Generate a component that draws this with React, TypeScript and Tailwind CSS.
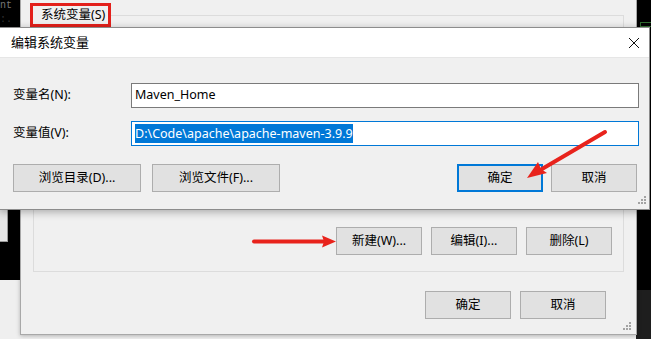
import React from "react";

const FONT = {
  fontFamily: "'Segoe UI', 'Noto Sans', 'Noto Sans CJK SC', sans-serif",
};

function Btn({
  children,
  className = "",
  focused = false,
}: {
  children: React.ReactNode;
  className?: string;
  focused?: boolean;
}) {
  return (
    <div
      className={`flex shrink-0 items-center justify-center bg-[#e1e1e1] text-[12.5px] text-black ${
        focused ? "border-2 border-[#0078d7]" : "border border-[#adadad]"
      } ${className}`}
    >
      {children}
    </div>
  );
}

function Grip({ className = "" }: { className?: string }) {
  // resize grip: triangular pattern of little dots
  const dots = [
    [6, 0],
    [3, 3],
    [6, 3],
    [0, 6],
    [3, 6],
    [6, 6],
  ];
  return (
    <svg width="9" height="9" className={className}>
      {dots.map(([x, y], i) => (
        <rect key={i} x={x} y={y} width="2" height="2" fill="#a3a3a3" />
      ))}
    </svg>
  );
}

export default function App() {
  return (
    <div
      className="relative w-[651px] h-[339px] overflow-hidden bg-[#efefef]"
      style={FONT}
    >
      {/* terminal bits behind the windows */}
      <div className="absolute left-0 top-0 w-[24px] h-[27px] bg-black overflow-hidden">
        <div className="text-[10px] leading-[11px] text-[#777] font-mono">nt</div>
        <div className="text-[10px] leading-[11px] text-[#333] mt-[3px] font-mono">:.</div>
      </div>
      <div className="absolute left-[636px] top-0 right-0 h-[290px] bg-black">
        <div className="mt-[22px] ml-[4px] w-[12px] h-[5px] border border-[#2f6b2f]" />
      </div>
      <div className="absolute left-[636px] top-[290px] right-0 bottom-0 bg-[#1e1e1e]" />
      <div className="absolute left-0 top-[209px] w-[20px] h-[71px] bg-black">
        <div className="w-[8px] h-[33px] bg-[#e6e6e6] border-r border-b border-[#9a9a9a]" />
      </div>

      {/* environment variables window (behind) */}
      <div className="absolute left-[20px] top-[-12px] w-[617px] h-[347px] bg-[#f0f0f0] border-l border-r border-b border-[#a8a8a8] shadow-[0_1px_4px_rgba(0,0,0,0.25)] flex flex-col">
        <div className="relative ml-[12px] mt-[27px] w-[591px] h-[257px] border border-[#dcdcdc] flex flex-col justify-end items-end pr-[11px] pb-[16px]">
          <div className="flex gap-[9px]">
            <Btn className="w-[86px] h-[28px]">新建(W)...</Btn>
            <Btn className="w-[86px] h-[28px]">编辑(I)...</Btn>
            <Btn className="w-[86px] h-[28px]">删除(L)</Btn>
          </div>
        </div>
        <div className="flex justify-end gap-[9px] mr-[30px] mt-[19px]">
          <Btn className="w-[86px] h-[28px]">确定</Btn>
          <Btn className="w-[86px] h-[28px]">取消</Btn>
        </div>
        <Grip className="absolute right-[4px] bottom-[3px]" />
      </div>

      {/* group title with red annotation box */}
      <div className="absolute left-[30px] top-[3px] w-[81px] h-[24px] border-[3px] border-[#e3201b] bg-[#f0f0f0] flex items-center pl-[8px] text-[12.5px] text-black">
        系统变量(S)
      </div>

      {/* edit system variable dialog */}
      <div className="absolute left-[-1px] top-[27px] w-[651px] h-[183px] bg-[#f0f0f0] border border-[#8c8c8c] shadow-[0_2px_8px_rgba(0,0,0,0.3)] flex flex-col">
        <div className="h-[30px] bg-white flex items-center justify-between pl-[11px] pr-[8px] border-b border-[#e6e6e6]">
          <span className="text-[13px] text-black">编辑系统变量</span>
          <svg width="12" height="12" viewBox="0 0 12 12" className="mr-[1px]">
            <path d="M1 1 L11 11 M11 1 L1 11" stroke="#111" strokeWidth="1" />
          </svg>
        </div>
        <div className="flex flex-col pt-[25px] pl-[13px] pr-[10px]">
          <div className="flex items-center">
            <span className="w-[118px] shrink-0 text-[12.5px] text-black">变量名(N):</span>
            <div className="w-[508px] shrink-0 h-[25px] bg-white border border-[#7a7a7a] flex items-center pl-[3px] text-[12.5px] text-black">
              Maven_Home
            </div>
          </div>
          <div className="flex items-center mt-[13px]">
            <span className="w-[118px] shrink-0 text-[12.5px] text-black">变量值(V):</span>
            <div className="w-[508px] shrink-0 h-[25px] bg-white border border-[#0078d7] flex items-center pl-[3px] text-[12.5px]">
              <span className="bg-[#0078d7] text-white leading-[19px]">
                D:\Code\apache\apache-maven-3.9.9
              </span>
            </div>
          </div>
          <div className="flex items-center mt-[18px] mr-[2px]">
            <Btn className="w-[128px] h-[28px]">浏览目录(D)...</Btn>
            <Btn className="w-[128px] h-[28px] ml-[11px]">浏览文件(F)...</Btn>
            <div className="flex-1" />
            <Btn focused className="w-[86px] h-[28px]">确定</Btn>
            <Btn className="w-[86px] h-[28px] ml-[8px]">取消</Btn>
          </div>
        </div>
        <Grip className="absolute right-[2px] bottom-[4px]" />
      </div>

      {/* red annotation arrows */}
      <svg className="absolute inset-0 pointer-events-none" width="651" height="339">
        <line x1="254" y1="241.5" x2="325" y2="241.5" stroke="#e8231c" strokeWidth="4" strokeLinecap="round" />
        <polygon points="336,241.5 322,235.5 324,241.5 322,247.5" fill="#e8231c" />
        <line x1="605" y1="132" x2="542" y2="169" stroke="#e8231c" strokeWidth="4" strokeLinecap="round" />
        <polygon points="527,178 538,162 541,169 547,173" fill="#e8231c" />
      </svg>
    </div>
  );
}
